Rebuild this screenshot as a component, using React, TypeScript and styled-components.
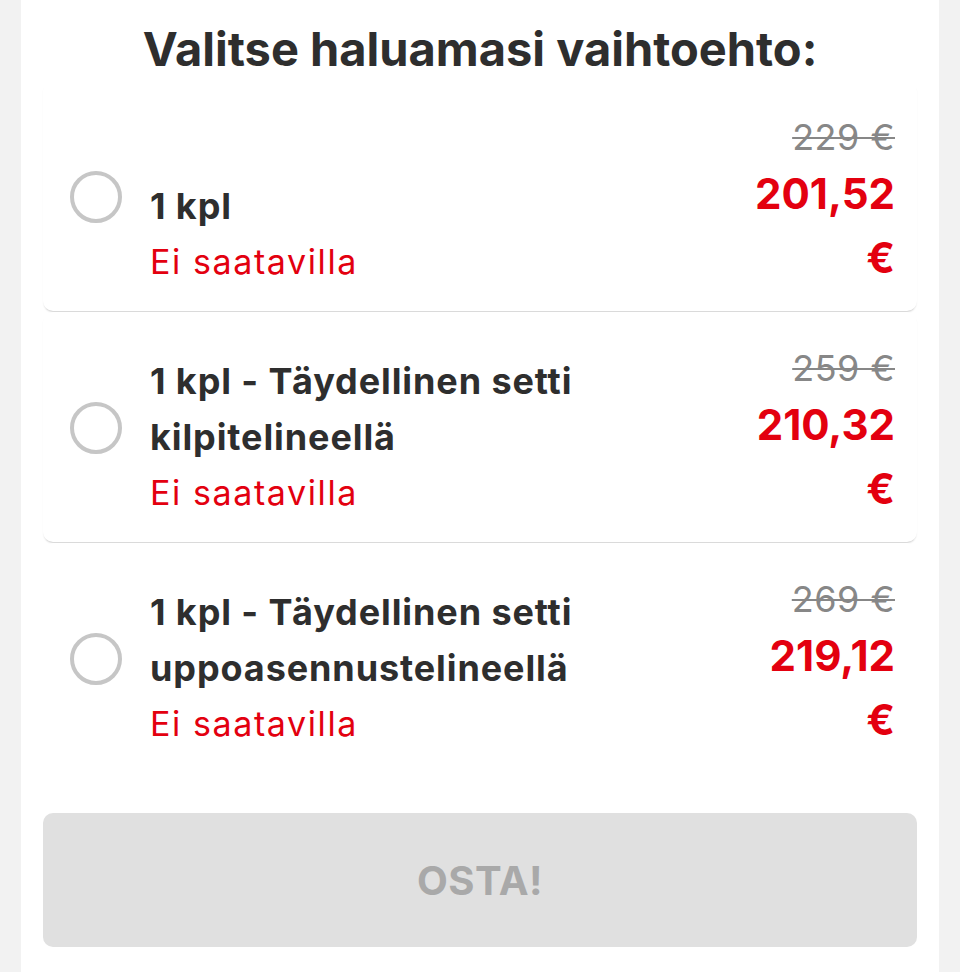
import React, { useState } from 'react';
import styled, { createGlobalStyle } from 'styled-components';

const GlobalStyle = createGlobalStyle`
  html, body {
    margin: 0;
    padding: 0;
    background: #f2f2f2;
  }
  body {
    font-family: Inter, "Noto Sans", "Liberation Sans", sans-serif;
    -webkit-font-smoothing: antialiased;
  }
`;

const Panel = styled.div`
  width: 918px;
  margin: 0 auto;
  min-height: 972px;
  box-sizing: border-box;
  background: #ffffff;
  padding: 21px 22px 25px;
  display: flex;
  flex-direction: column;
`;

const Title = styled.h2`
  margin: 0 0 4px;
  font-size: 47px;
  line-height: 56px;
  font-weight: 700;
  color: #2e2e2e;
  text-align: center;
`;

const Options = styled.div`
  display: flex;
  flex-direction: column;
`;

const OptionCard = styled.label<{ $last?: boolean }>`
  display: flex;
  align-items: center;
  min-height: 230px;
  box-sizing: border-box;
  padding: 29px 22px 21px 27px;
  border-radius: 10px;
  background: #fff;
  cursor: pointer;
  box-shadow: ${p => (p.$last ? 'none' : '0 2px 2px -1px rgba(0, 0, 0, 0.2)')};
  margin-bottom: 1px;
`;

const Radio = styled.span<{ $checked: boolean }>`
  flex: 0 0 auto;
  width: 52px;
  height: 52px;
  box-sizing: border-box;
  border-radius: 50%;
  border: 4px solid ${p => (p.$checked ? '#e3000f' : '#c6c6c6')};
  margin-right: 28px;
  margin-bottom: 6px;
  display: flex;
  align-items: center;
  justify-content: center;

  &::after {
    content: '';
    width: 24px;
    height: 24px;
    border-radius: 50%;
    background: ${p => (p.$checked ? '#e3000f' : 'transparent')};
  }
`;

const Label = styled.div`
  flex: 1 1 auto;
  align-self: flex-end;
  display: flex;
  flex-direction: column;
`;

const Name = styled.div`
  font-size: 36px;
  line-height: 56px;
  font-weight: 700;
  letter-spacing: 0.9px;
  color: #2e2e2e;
`;

const Status = styled.div`
  font-size: 34px;
  line-height: 56px;
  font-weight: 400;
  letter-spacing: 1.6px;
  color: #e3000f;
`;

const Price = styled.div`
  flex: 0 0 150px;
  align-self: flex-end;
  text-align: right;
  display: flex;
  flex-direction: column;
  align-items: flex-end;
`;

const OldPrice = styled.span`
  font-size: 36px;
  line-height: 50px;
  letter-spacing: 0.5px;
  color: #878787;
  text-decoration: line-through;
  text-decoration-thickness: 2px;
`;

const NewPrice = styled.span`
  font-size: 42px;
  line-height: 64px;
  font-weight: 700;
  color: #e3000f;
`;

const BuyButton = styled.button`
  margin-top: 39px;
  height: 134px;
  width: 100%;
  border: none;
  border-radius: 10px;
  background: #e0e0e0;
  color: #a9a9a9;
  font-family: inherit;
  font-size: 40px;
  font-weight: 700;
  letter-spacing: 0.5px;
  cursor: not-allowed;
`;

type Option = {
  id: string;
  name: string;
  oldPrice: string;
  price: string;
};

const options: Option[] = [
  { id: 'a', name: '1 kpl', oldPrice: '229 €', price: '201,52 €' },
  { id: 'b', name: '1 kpl - Täydellinen setti kilpitelineellä', oldPrice: '259 €', price: '210,32 €' },
  { id: 'c', name: '1 kpl - Täydellinen setti uppoasennustelineellä', oldPrice: '269 €', price: '219,12 €' },
];

export default function App() {
  const [selected] = useState<string | null>(null);

  return (
    <>
      <GlobalStyle />
      <Panel>
        <Title>Valitse haluamasi vaihtoehto:</Title>
        <Options>
          {options.map((o, i) => (
            <OptionCard key={o.id} $last={i === options.length - 1}>
              <Radio $checked={selected === o.id} />
              <Label>
                <Name>{o.name}</Name>
                <Status>Ei saatavilla</Status>
              </Label>
              <Price>
                <OldPrice>{o.oldPrice}</OldPrice>
                <NewPrice>{o.price}</NewPrice>
              </Price>
            </OptionCard>
          ))}
        </Options>
        <BuyButton disabled>OSTA!</BuyButton>
      </Panel>
    </>
  );
}
